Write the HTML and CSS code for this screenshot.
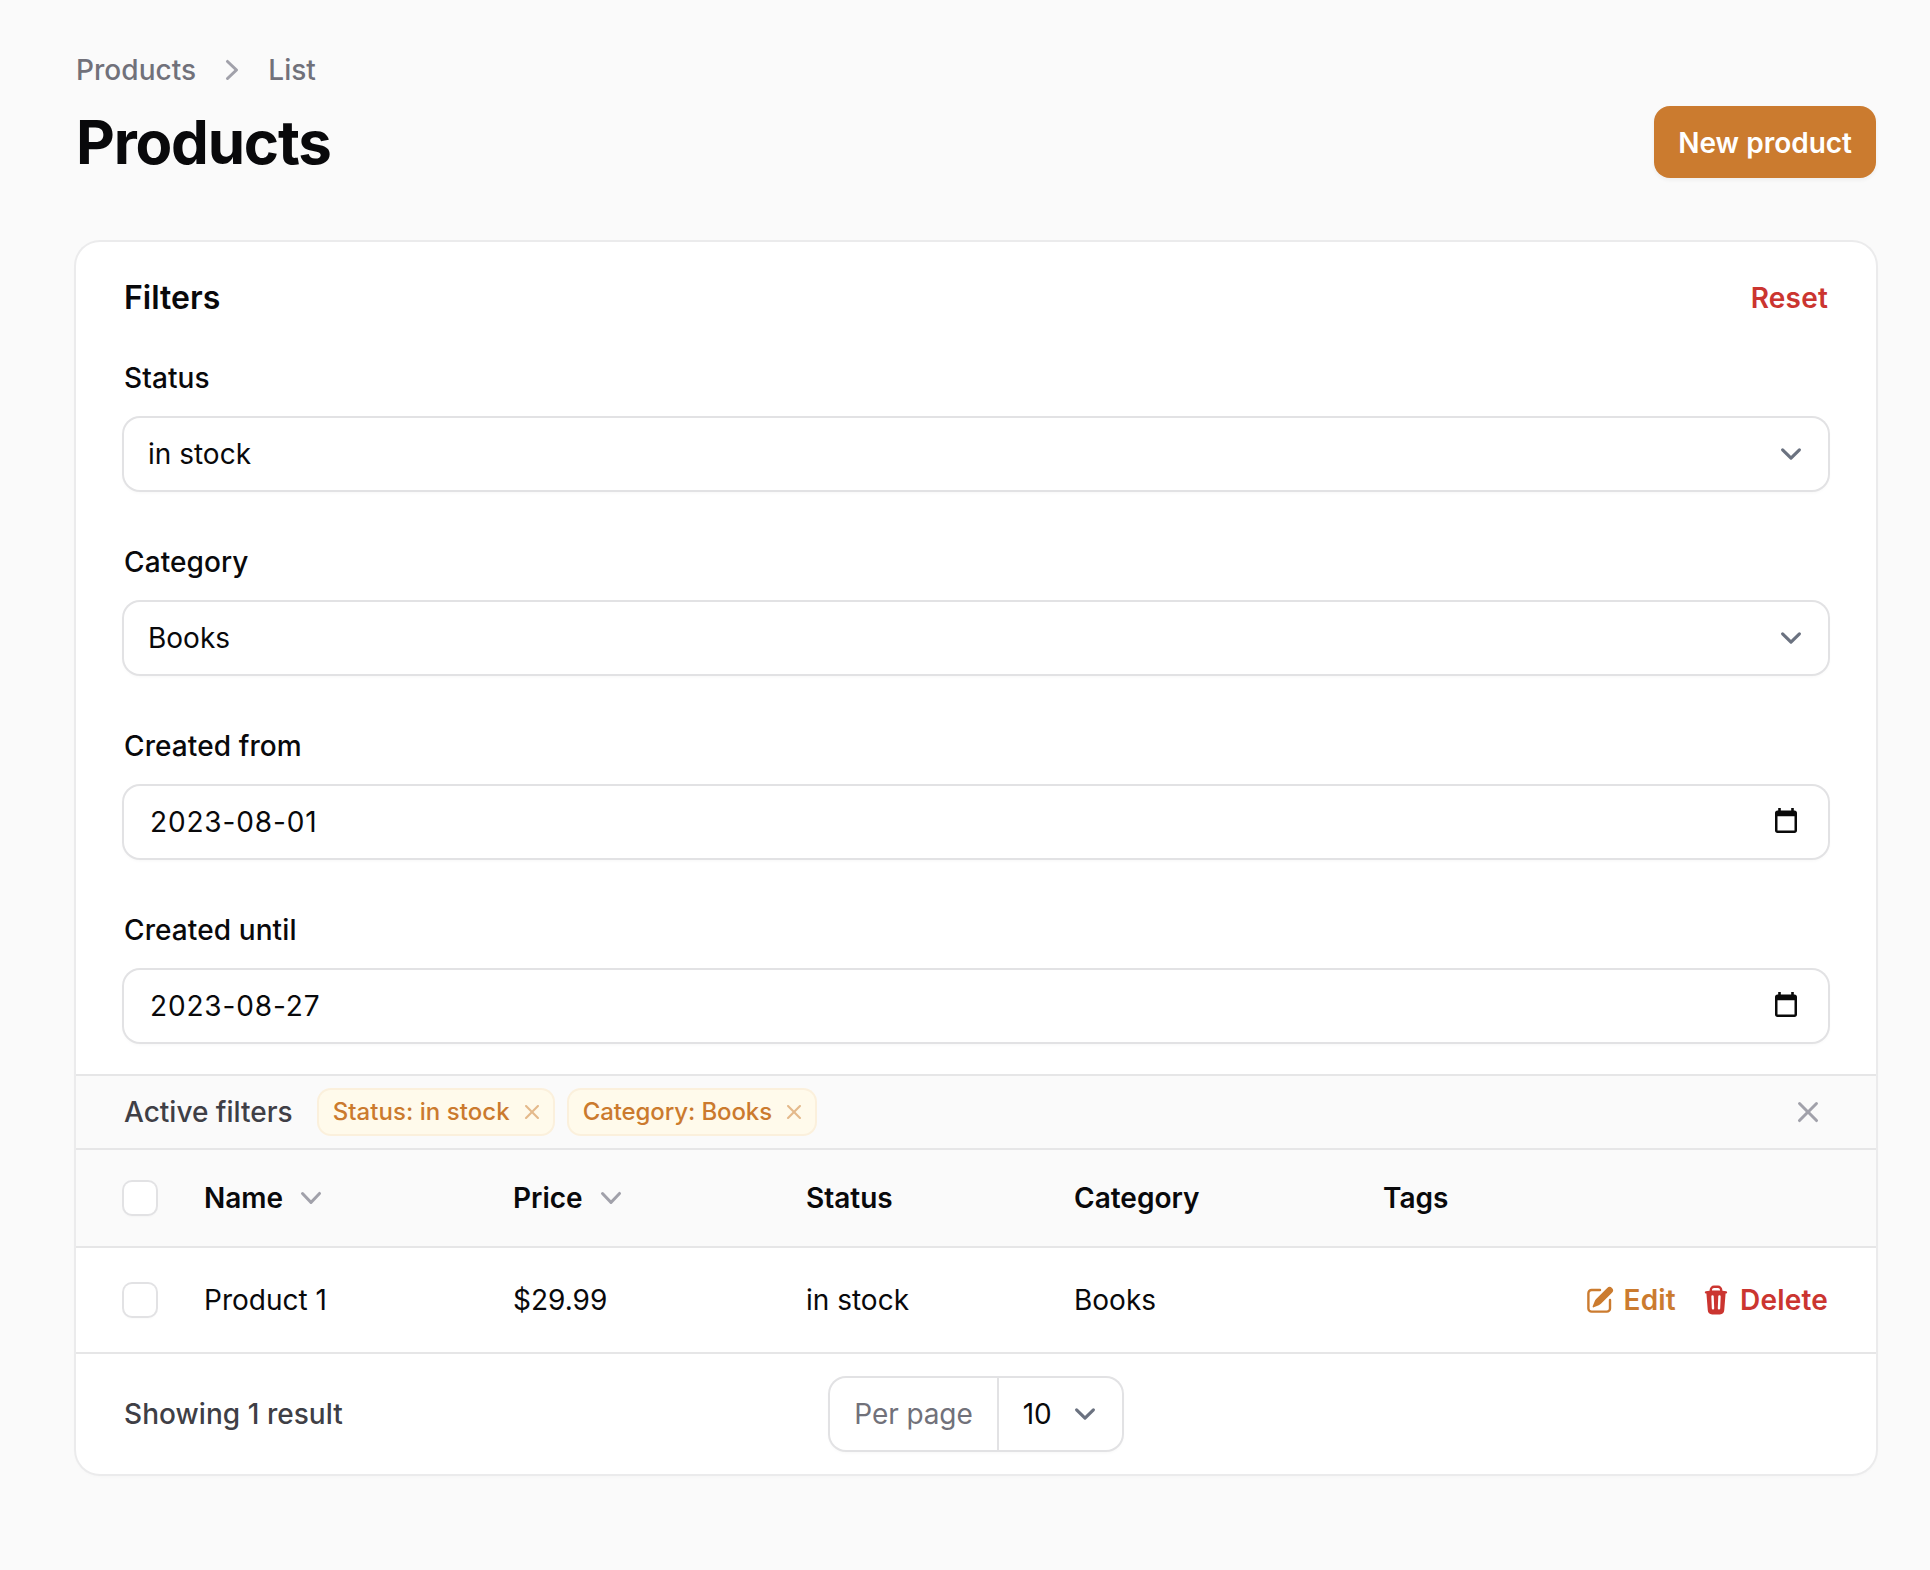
FILE: index.html
```html
<!DOCTYPE html>
<html lang="en">
<head>
<meta charset="utf-8">
<title>Products</title>
<link rel="stylesheet" href="styles.css">
</head>
<body>
<svg class="sprite" aria-hidden="true">
  <symbol id="i-down" viewBox="0 0 20 20"><path fill-rule="evenodd" clip-rule="evenodd" d="M5.23 7.21a.75.75 0 011.06.02L10 11.168l3.71-3.938a.75.75 0 111.08 1.04l-4.25 4.5a.75.75 0 01-1.08 0l-4.25-4.5a.75.75 0 01.02-1.06z"/></symbol>
  <symbol id="i-right" viewBox="0 0 20 20"><path fill-rule="evenodd" clip-rule="evenodd" d="M7.21 14.77a.75.75 0 01.02-1.06L11.168 10 7.23 6.29a.75.75 0 111.04-1.08l4.5 4.25a.75.75 0 010 1.08l-4.5 4.25a.75.75 0 01-1.06-.02z"/></symbol>
  <symbol id="i-x" viewBox="0 0 20 20"><path d="M6.28 5.22a.75.75 0 00-1.06 1.06L8.94 10l-3.72 3.72a.75.75 0 101.06 1.06L10 11.06l3.72 3.72a.75.75 0 101.06-1.06L11.06 10l3.72-3.72a.75.75 0 00-1.06-1.06L10 8.94 6.28 5.22z"/></symbol>
  <symbol id="i-select" viewBox="0 0 20 20"><path d="M6 8l4 4 4-4" fill="none" stroke="currentColor" stroke-width="1.5" stroke-linecap="round" stroke-linejoin="round"/></symbol>
  <symbol id="i-cal" viewBox="0 0 22 25"><path fill-rule="evenodd" clip-rule="evenodd" d="M3.2 0h2.6v2.4h10.4V0h2.6v2.4h.7C21 2.4 22 3.4 22 4.9v17.6c0 1.5-1 2.5-2.5 2.5h-17C1 25 0 24 0 22.500V4.900C0 3.400 1 2.400 2.500 2.400h.7V0zM2.500 8.200v14.300h17V8.200h-17z"/></symbol>
</svg>
<main class="page">
  <nav class="crumbs">
    <span>Products</span>
    <svg class="crumb-sep"><use href="#i-right"/></svg>
    <span>List</span>
  </nav>
  <header class="head">
    <h1>Products</h1>
    <button class="primary" type="button">New product</button>
  </header>
  <section class="card">
    <form class="filters">
      <div class="filters-head">
        <h2>Filters</h2>
        <a class="reset">Reset</a>
      </div>
      <div class="field">
        <label>Status</label>
        <div class="control">
          <select class="input"><option>in stock</option></select>
          <svg class="select-arrow"><use href="#i-select"/></svg>
        </div>
      </div>
      <div class="field">
        <label>Category</label>
        <div class="control">
          <select class="input"><option>Books</option></select>
          <svg class="select-arrow"><use href="#i-select"/></svg>
        </div>
      </div>
      <div class="field">
        <label>Created from</label>
        <div class="control">
          <input class="input date" type="text" value="2023-08-01">
          <svg class="cal"><use href="#i-cal"/></svg>
        </div>
      </div>
      <div class="field">
        <label>Created until</label>
        <div class="control">
          <input class="input date" type="text" value="2023-08-27">
          <svg class="cal"><use href="#i-cal"/></svg>
        </div>
      </div>
    </form>
    <div class="active">
      <span class="active-label">Active filters</span>
      <span class="chip">Status: in stock<svg class="chip-x"><use href="#i-x"/></svg></span>
      <span class="chip">Category: Books<svg class="chip-x"><use href="#i-x"/></svg></span>
      <svg class="clear"><use href="#i-x"/></svg>
    </div>
    <table class="table">
      <colgroup>
        <col class="c1"><col class="c2"><col class="c3"><col class="c4"><col class="c5"><col>
      </colgroup>
      <thead>
        <tr>
          <th class="check"><span class="box"></span></th>
          <th><span class="sort">Name<svg class="sort-i"><use href="#i-down"/></svg></span></th>
          <th><span class="sort">Price<svg class="sort-i"><use href="#i-down"/></svg></span></th>
          <th>Status</th>
          <th>Category</th>
          <th>Tags</th>
        </tr>
      </thead>
      <tbody>
        <tr>
          <td class="check"><span class="box"></span></td>
          <td>Product 1</td>
          <td>$29.99</td>
          <td>in stock</td>
          <td>Books</td>
          <td class="actions-cell">
            <div class="actions">
              <a class="act edit"><svg class="act-i" viewBox="0 0 20 20"><path d="M5.433 13.917l1.262-3.155A4 4 0 017.58 9.42l6.92-6.918a2.121 2.121 0 013 3l-6.92 6.918c-.383.383-.84.685-1.343.886l-3.154 1.262a.5.5 0 01-.65-.65z"/><path d="M3.5 5.75c0-.69.56-1.25 1.25-1.25H10A.75.75 0 0010 3H4.75A2.75 2.75 0 002 5.75v9.5A2.75 2.75 0 004.75 18h9.5A2.75 2.75 0 0017 15.25V10a.75.75 0 00-1.5 0v5.25c0 .69-.56 1.25-1.25 1.25h-9.5c-.69 0-1.25-.56-1.25-1.25v-9.5z"/></svg>Edit</a>
              <a class="act del"><svg class="act-i" viewBox="0 0 20 20"><path fill-rule="evenodd" clip-rule="evenodd" d="M8.75 1A2.75 2.75 0 006 3.75v.443c-.795.077-1.584.176-2.365.298a.75.75 0 10.23 1.482l.149-.022.841 10.518A2.75 2.75 0 007.596 19h4.807a2.75 2.75 0 002.742-2.53l.841-10.52.149.023a.75.75 0 00.23-1.482A41.03 41.03 0 0014 4.193V3.75A2.75 2.75 0 0011.25 1h-2.5zM10 4c.84 0 1.673.025 2.5.075V3.75c0-.69-.56-1.25-1.25-1.25h-2.5c-.69 0-1.25.56-1.25 1.25v.325C8.327 4.025 9.16 4 10 4zM8.58 7.72a.75.75 0 00-1.5.06l.3 7.5a.75.75 0 101.5-.06l-.3-7.5zm4.34.06a.75.75 0 10-1.5-.06l-.3 7.5a.75.75 0 101.5.06l.3-7.5z"/></svg>Delete</a>
            </div>
          </td>
        </tr>
      </tbody>
    </table>
    <footer class="foot">
      <span class="count">Showing 1 result</span>
      <div class="perpage">
        <span class="perpage-label">Per page</span>
        <div class="perpage-value">10<svg class="perpage-arrow"><use href="#i-select"/></svg></div>
      </div>
      <span></span>
    </footer>
  </section>
</main>
</body>
</html>
```
FILE: styles.css
```css
* { box-sizing: border-box; }
html, body { margin: 0; padding: 0; }
body {
  background: #fafafa;
  color: #09090b;
  font-family: Inter, "Liberation Sans", sans-serif;
  font-size: 28px;
  line-height: 40px;
  -webkit-font-smoothing: antialiased;
}
.sprite { display: none; }
.page { padding: 50px 54px 94px 76px; }

.crumbs {
  display: flex;
  align-items: center;
  gap: 16px;
  height: 40px;
  margin-bottom: 16px;
  color: #71717a;
  font-weight: 500;
  letter-spacing: .05px;
}
.crumb-sep { width: 40px; height: 40px; fill: #a1a1aa; }

.head { display: flex; align-items: center; justify-content: space-between; margin-bottom: 64px; }
h1 { margin: 0; font-size: 60px; line-height: 72px; font-weight: 700; letter-spacing: -1.2px; }
.primary {
  height: 72px;
  padding: 1px 24px 0;
  border: 0;
  border-radius: 16px;
  background: #cb7b2f;
  color: #fff;
  font: 600 28px/40px Inter, sans-serif;
  box-shadow: 0 2px 4px rgba(0, 0, 0, .05);
}

.card {
  background: #fff;
  border-radius: 24px;
  box-shadow: 0 0 0 2px #ebebec, 0 2px 4px rgba(0, 0, 0, .03);
  overflow: hidden;
}
.filters { padding: 32px 48px; border-bottom: 2px solid #e6e6e7; }
.filters-head { display: flex; align-items: center; justify-content: space-between; height: 48px; margin-bottom: 36px; }
h2 { margin: 0; font-size: 32px; line-height: 48px; font-weight: 600; }
.reset { color: #cb3530; font-weight: 600; letter-spacing: .2px; }

.field { margin-bottom: 52px; }
.field:last-child { margin-bottom: 0; }
.field label { display: block; height: 40px; margin-bottom: 20px; font-weight: 500; letter-spacing: .1px; }
.control { position: relative; }
.input {
  display: block;
  width: 100%;
  height: 72px;
  margin: 0;
  padding: 0 24px;
  border: 0;
  border-radius: 16px;
  background: #fff;
  color: #09090b;
  font: 400 28px/40px Inter, sans-serif;
  box-shadow: 0 0 0 2px #e2e2e4, 0 2px 4px rgba(0, 0, 0, .05);
  outline: 0;
  appearance: none;
}
.date { padding-left: 26px; letter-spacing: .85px; }
.select-arrow { position: absolute; right: 16px; top: 15px; width: 42px; height: 42px; color: #6b7280; pointer-events: none; }
.cal { position: absolute; right: 31px; top: 22px; width: 22px; height: 25px; fill: #0a0a0a; pointer-events: none; }

.active {
  display: flex;
  align-items: center;
  height: 74px;
  padding: 0 48px;
  background: #fafafa;
  border-bottom: 2px solid #e6e6e7;
}
.active-label { margin-right: 26px; color: #3f3f46; font-weight: 500; }
.chip {
  display: inline-flex;
  align-items: center;
  gap: 8px;
  height: 44px;
  margin-right: 16px;
  padding: 0 7px 0 14px;
  border-radius: 12px;
  background: #fffaeb;
  box-shadow: 0 0 0 2px #fbf0dc;
  color: #cb7a2e;
  font-size: 24px;
  line-height: 32px;
  font-weight: 500;
  letter-spacing: .05px;
}
.chip + .chip { letter-spacing: -.1px; }
.chip-x { width: 28px; height: 28px; fill: #cb7a2e; opacity: .5; }
.clear { width: 40px; height: 40px; margin-left: auto; fill: #a1a1aa; }

.table { width: 100%; border-collapse: separate; border-spacing: 0; table-layout: fixed; }
.c1 { width: 104px; }
.c2 { width: 309px; }
.c3 { width: 293px; }
.c4 { width: 268px; }
.c5 { width: 309px; }
th, td { padding: 0 0 0 24px; text-align: left; border-bottom: 2px solid #e6e6e7; }
th { height: 98px; background: #fafafa; font-weight: 600; }
td { height: 106px; font-weight: 400; }
.check { padding-left: 48px; }
.box {
  display: block;
  width: 32px;
  height: 32px;
  border-radius: 8px;
  background: #fff;
  box-shadow: 0 0 0 2px #e2e2e4, 0 2px 3px rgba(0, 0, 0, .05);
}
.sort { display: inline-flex; align-items: center; gap: 8px; }
.sort-i { width: 40px; height: 40px; fill: #a1a1aa; }
.actions-cell { padding-right: 48px; }
.actions { display: flex; justify-content: flex-end; gap: 24px; }
.act { display: inline-flex; align-items: center; gap: 8px; font-weight: 600; letter-spacing: .2px; }
.act-i { width: 32px; height: 32px; fill: currentColor; }
.edit { color: #cb7b2f; }
.del { color: #cb3530; }

.foot { display: grid; grid-template-columns: 1fr auto 1fr; align-items: center; height: 120px; padding: 0 48px; }
.count { color: #3f3f46; font-weight: 500; letter-spacing: .05px; }
.perpage {
  display: flex;
  height: 72px;
  align-items: stretch;
  border-radius: 16px;
  background: #fff;
  box-shadow: 0 0 0 2px #e2e2e4, 0 2px 4px rgba(0, 0, 0, .05);
}
.perpage-label { display: flex; align-items: center; padding: 0 24px; color: #71717a; border-right: 2px solid #e2e2e4; letter-spacing: -.1px; }
.perpage-value { display: flex; align-items: center; width: 123px; padding-left: 24px; position: relative; }
.perpage-arrow { position: absolute; right: 16px; top: 15px; width: 42px; height: 42px; color: #6b7280; }
```
